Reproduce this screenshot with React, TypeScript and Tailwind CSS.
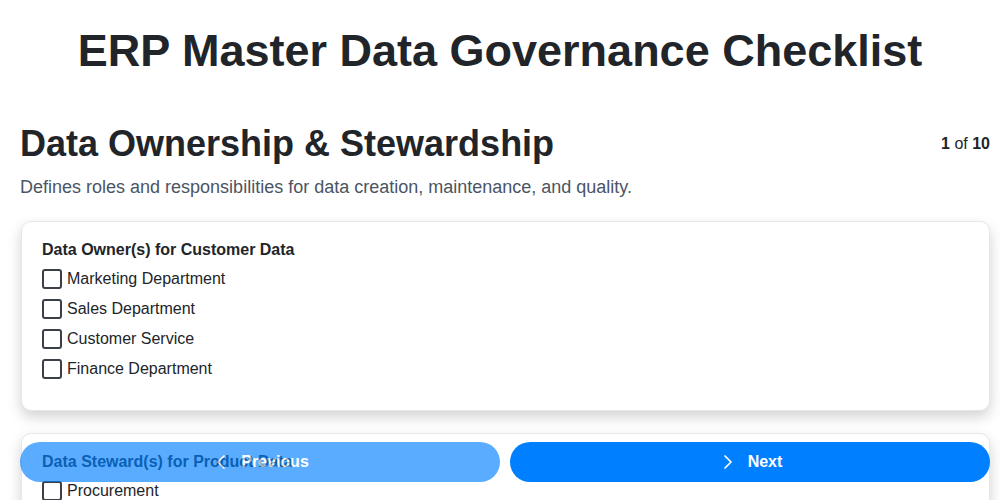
import React, { useState } from 'react';
import { ChevronLeft, ChevronRight } from 'lucide-react';

interface Question {
  title: string;
  options: string[];
}

const QUESTIONS: Question[] = [
  {
    title: 'Data Owner(s) for Customer Data',
    options: ['Marketing Department', 'Sales Department', 'Customer Service', 'Finance Department'],
  },
  {
    title: 'Data Steward(s) for Product Data',
    options: ['Procurement', 'Product Management', 'Engineering', 'Supply Chain'],
  },
  {
    title: 'Data Owner(s) for Vendor Data',
    options: ['Procurement', 'Accounts Payable', 'Legal'],
  },
];

const App: React.FC = () => {
  const [checked, setChecked] = useState<Record<string, boolean>>({});

  const toggle = (key: string) => setChecked((c) => ({ ...c, [key]: !c[key] }));

  return (
    <div className="min-h-screen bg-white pb-24 font-['Liberation_Sans',Arial,sans-serif] text-[#212529]">
      <h1 className="pt-6 text-center text-[45px] font-bold leading-[54px]">
        ERP Master Data Governance Checklist
      </h1>

      <div className="pl-5 pr-[10px]">
        <div className="mt-[44px] flex items-center justify-between">
          <h2 className="text-[36px] font-bold leading-[43px]">Data Ownership &amp; Stewardship</h2>
          <div className="text-base">
            <span className="font-bold">1</span> of <span className="font-bold">10</span>
          </div>
        </div>
        <p className="mt-[9px] text-lg leading-[27px] text-[#4b5563]">
          Defines roles and responsibilities for data creation, maintenance, and quality.
        </p>

        {/* question cards */}
        <div className="mt-[20px] ml-px flex flex-col gap-[22px]">
          {QUESTIONS.map((q, qi) => (
            <div
              key={qi}
              className="rounded-[10px] border border-[#e5e7eb] bg-white px-5 pt-4 pb-[26px] shadow-[0_6px_14px_rgba(0,0,0,0.18)]"
            >
              <div className="mb-0.5 text-base font-bold leading-6">{q.title}</div>
              {q.options.map((opt) => {
                const key = `${qi}-${opt}`;
                return (
                  <label key={key} className="flex h-[30px] cursor-pointer items-center gap-[5px] text-base">
                    <span
                      onClick={() => toggle(key)}
                      className={`flex h-5 w-5 items-center justify-center rounded-[3px] border-2 ${
                        checked[key] ? 'border-[#0080ff] bg-[#0080ff]' : 'border-[#3b4048] bg-white'
                      }`}
                    />
                    <span>{opt}</span>
                  </label>
                );
              })}
            </div>
          ))}
        </div>
      </div>

      <div className="fixed bottom-[18px] left-5 right-[10px] flex gap-[10px]">
        <button className="flex h-10 flex-1 items-center justify-center gap-2 rounded-full bg-[#0080ff] pr-[2px] text-base font-bold text-white opacity-65">
          <ChevronLeft size={24} strokeWidth={1.75} />
          Previous
        </button>
        <button className="flex h-10 flex-1 items-center justify-center gap-2 rounded-full bg-[#0080ff] pr-[2px] text-base font-bold text-white">
          <ChevronRight size={24} strokeWidth={1.75} />
          Next
        </button>
      </div>
    </div>
  );
};

export default App;
